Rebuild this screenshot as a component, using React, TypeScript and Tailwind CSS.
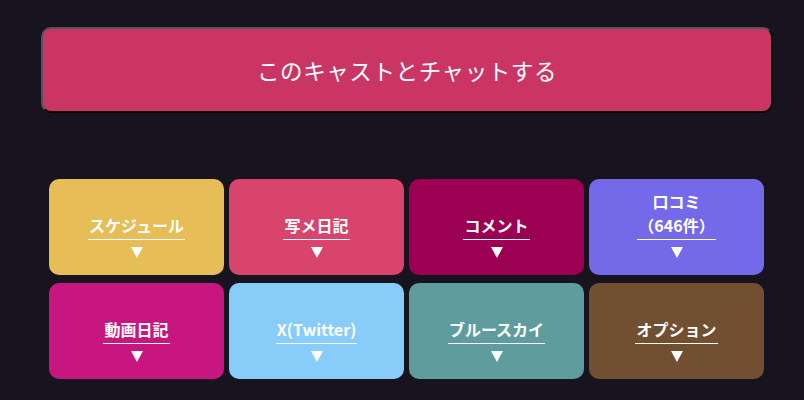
import React from "react";

const cells: { label: string[]; bg: string }[] = [
  { label: ["スケジュール"], bg: "bg-[#e6bd56]" },
  { label: ["写メ日記"], bg: "bg-[#d8446c]" },
  { label: ["コメント"], bg: "bg-[#9b0052]" },
  { label: ["口コミ", "（646件）"], bg: "bg-[#7469e8]" },
  { label: ["動画日記"], bg: "bg-[#c71680]" },
  { label: ["X(Twitter)"], bg: "bg-[#88cdf9]" },
  { label: ["ブルースカイ"], bg: "bg-[#5f9c9e]" },
  { label: ["オプション"], bg: "bg-[#724f31]" },
];

export default function App() {
  return (
    <div
      className="w-[804px] h-[400px] bg-[#18141f] pt-[27px] overflow-hidden"
      style={{ fontFamily: '"Noto Sans CJK JP", "Noto Sans", sans-serif' }}
    >
      <div className="ml-[41px] w-[732px] h-[86px] rounded-[10px] border-2 border-t-[#555558] border-l-[#555558] border-r-black border-b-black bg-[#cb3565] flex items-center justify-center">
        <span className="text-white text-[22.5px] leading-none tracking-[0.6px]">
          このキャストとチャットする
        </span>
      </div>
      <div className="ml-[49px] mt-[66px] grid grid-cols-[repeat(4,175px)] gap-x-[5px] gap-y-[8px]">
        {cells.map((c, i) => (
          <div
            key={i}
            className={`${c.bg} h-[96px] rounded-[10px] flex flex-col items-center justify-end pb-[17px]`}
          >
            <div className="border-b border-white px-[1px] pb-[2px] text-center">
              {c.label.map((l, j) => (
                <div key={j} className="text-white font-bold text-[16px] leading-[24px]">
                  {l}
                </div>
              ))}
            </div>
            <svg width="12" height="11" viewBox="0 0 12 11" className="mt-[7px]">
              <polygon points="0,0 12,0 6,11" fill="white" />
            </svg>
          </div>
        ))}
      </div>
    </div>
  );
}
